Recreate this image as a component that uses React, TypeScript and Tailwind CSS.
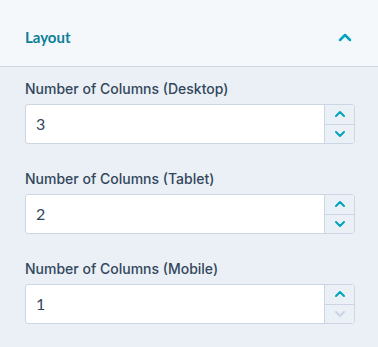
import { useState } from "react";

const Chevron = ({ up, disabled }: { up?: boolean; disabled?: boolean }) => (
  <svg
    width="12"
    height="8"
    viewBox="0 0 12 8"
    fill="none"
    stroke={disabled ? "#cbd6e2" : "#00a4bd"}
    strokeWidth="2"
    strokeLinecap="round"
    strokeLinejoin="round"
  >
    {up ? <path d="M2 6 L6 2 L10 6" /> : <path d="M2 2 L6 6 L10 2" />}
  </svg>
);

const NumberField = ({ label, value, min }: { label: string; value: number; min: number }) => {
  const [v, setV] = useState(value);
  return (
    <div className="flex flex-col">
      <label className="h-[20px] font-['Inter',sans-serif] text-[14px] leading-[20px] font-medium text-[#33475b]">
        {label}
      </label>
      <div className="mt-[5px] flex h-[40px] rounded-[3px] border border-[#cbd6e2] bg-white">
        <input
          value={v}
          onChange={(e) => setV(Number(e.target.value) || 0)}
          className="min-w-0 flex-1 bg-transparent pl-[10px] text-[16px] text-[#33475b] outline-none"
        />
        <div className="flex w-[30px] flex-col border-l border-[#cbd6e2] bg-[#eaf0f6]">
          <button
            onClick={() => setV(v + 1)}
            className="flex flex-1 items-center justify-center border-b border-[#cbd6e2]"
          >
            <Chevron up />
          </button>
          <button
            onClick={() => setV(Math.max(min, v - 1))}
            className="flex flex-1 items-center justify-center"
          >
            <Chevron disabled={v <= min} />
          </button>
        </div>
      </div>
    </div>
  );
};

export default function App() {
  return (
    <div className="h-[347px] w-[378px] bg-[#eaf0f6] font-['Lato',sans-serif]">
      <div className="flex h-[67px] items-center justify-between border-b border-[#cbd6e2] bg-[#f5f8fa] pl-[25px] pr-[26px] pt-[8px]">
        <span className="text-[15px] font-bold text-[#0b7f99]">Layout</span>
        <svg width="14" height="9" viewBox="0 0 14 9" fill="none" stroke="#00a4bd" strokeWidth="2.5" strokeLinecap="round" strokeLinejoin="round">
          <path d="M2 7 L7 2 L12 7" />
        </svg>
      </div>
      <div className="flex flex-col gap-[25px] pl-[25px] pr-[23px] pt-[12px]">
        <NumberField label="Number of Columns (Desktop)" value={3} min={1} />
        <NumberField label="Number of Columns (Tablet)" value={2} min={1} />
        <NumberField label="Number of Columns (Mobile)" value={1} min={1} />
      </div>
    </div>
  );
}
